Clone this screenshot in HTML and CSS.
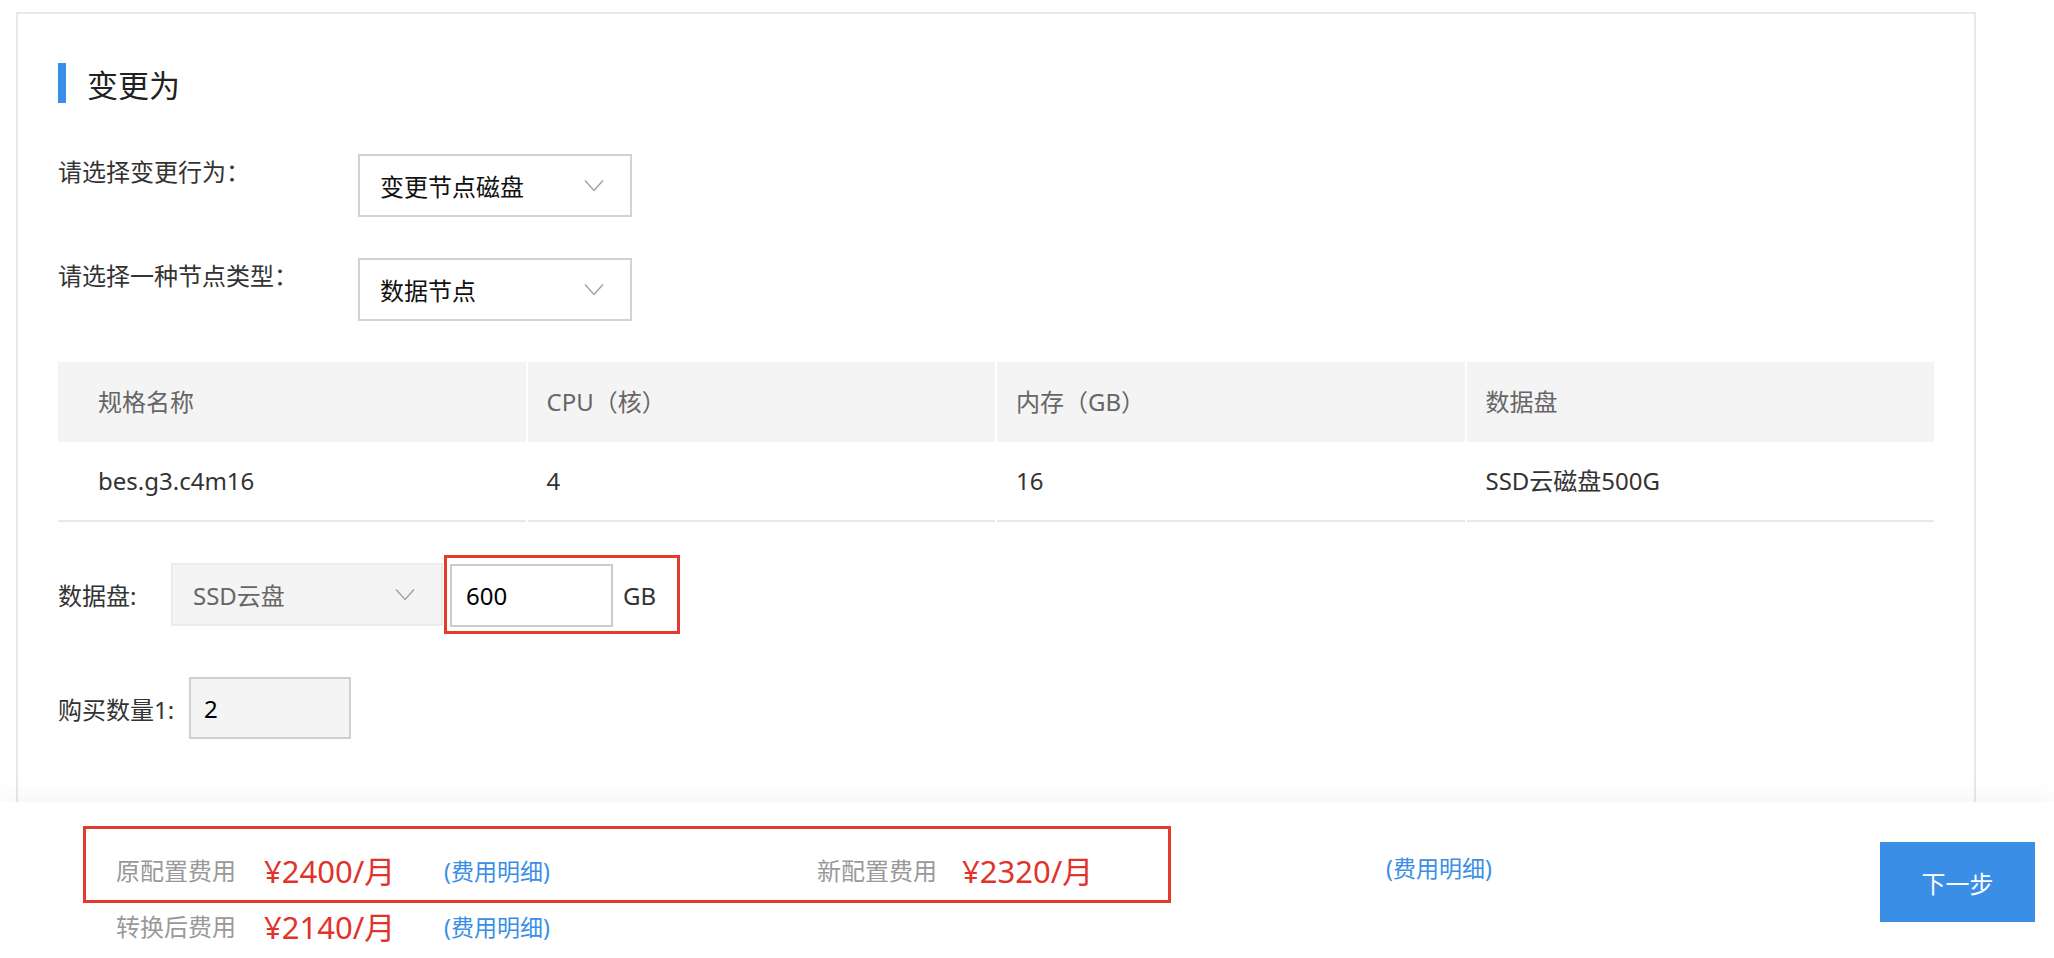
FILE: index.html
```html
<!DOCTYPE html>
<html lang="zh-CN">
  <head>
    <meta charset="UTF-8" />
    <meta name="viewport" content="width=device-width, initial-scale=1.0" />
    <title>变更配置</title>
    <link rel="stylesheet" href="styles.css">
  </head>
  <body>
<div class="page">
  <div class="main">
    <div class="panel">
      <h2 class="title">变更为</h2>

      <div class="form-row">
        <label class="form-label">请选择变更行为：</label>
        <div class="select">
          <span>变更节点磁盘</span>
          <svg class="arrow" width="20" height="13" viewBox="0 0 20 13"><polyline points="1,1.5 10,11.5 19,1.5" /></svg>
        </div>
      </div>

      <div class="form-row">
        <label class="form-label">请选择一种节点类型：</label>
        <div class="select">
          <span>数据节点</span>
          <svg class="arrow" width="20" height="13" viewBox="0 0 20 13"><polyline points="1,1.5 10,11.5 19,1.5" /></svg>
        </div>
      </div>

      <!-- 当前规格 -->
      <div class="spec-table">
        <div class="th first">规格名称</div>
        <div class="th">CPU（核）</div>
        <div class="th">内存（GB）</div>
        <div class="th">数据盘</div>
        <div class="td first">bes.g3.c4m16</div>
        <div class="td">4</div>
        <div class="td">16</div>
        <div class="td">SSD云磁盘500G</div>
      </div>

      <div class="disk-row">
        <span class="disk-label">数据盘:</span>
        <div class="select select-disabled">
          <span>SSD云盘</span>
          <svg class="arrow" width="20" height="13" viewBox="0 0 20 13"><polyline points="1,1.5 10,11.5 19,1.5" /></svg>
        </div>
        <div class="mark-box">
          <input class="size-input" type="text" value="600" />
          <span class="unit">GB</span>
        </div>
      </div>

      <div class="qty-row">
        <span class="qty-label">购买数量1:</span>
        <input class="qty-input" type="text" value="2" />
      </div>
    </div>
  </div>

  <div class="footer">
    <div class="fee-area">
      <div class="fee-main">
        <div class="fee-box">
          <div class="fee-group">
            <span class="fee-label">原配置费用</span>
            <span class="fee-price">¥2400/月</span>
            <a href="#" class="fee-link">(费用明细)</a>
          </div>
          <div class="fee-group fee-group-last">
            <span class="fee-label">新配置费用</span>
            <span class="fee-price">¥2320/月</span>
          </div>
        </div>
        <a href="#" class="fee-link fee-link-far">(费用明细)</a>
      </div>
      <div class="fee-row">
        <span class="fee-label">转换后费用</span>
        <span class="fee-price">¥2140/月</span>
        <a href="#" class="fee-link">(费用明细)</a>
      </div>
    </div>
    <button type="button" class="btn-next">下一步</button>
  </div>
</div>
  </body>
</html>
```

FILE: styles.css
```css
* {
  margin: 0;
  padding: 0;
  box-sizing: border-box;
  font-family: "Noto Sans", "Noto Sans CJK SC", sans-serif;
}

body {
  background-color: #fff;
  color: #333;
  font-size: 24px;
}

.page {
  display: flex;
  flex-direction: column;
  height: 100vh;
  overflow: hidden;
}

.main {
  flex: 1;
  overflow: hidden;
}

.panel {
  width: 1960px;
  min-height: 900px;
  margin: 12px 0 0 16px;
  padding: 49px 40px 0;
  border: 2px solid #e8e8e8;
}

.title {
  display: flex;
  align-items: center;
  height: 40px;
  margin-bottom: 51px;
  font-size: 31px;
  font-weight: normal;
  color: #222;
}

.title::before {
  content: "";
  width: 8px;
  height: 40px;
  margin-right: 21px;
  background: #3b8ee8;
}

.form-row {
  display: flex;
  align-items: flex-start;
  margin-bottom: 41px;
}

.form-label {
  width: 300px;
  line-height: 36px;
  color: #333;
}

.select {
  display: flex;
  justify-content: space-between;
  align-items: center;
  width: 274px;
  height: 63px;
  padding: 0 26px 0 20px;
  border: 2px solid #d2d2d2;
  color: #111;
  background: #fff;
}

.arrow polyline {
  fill: none;
  stroke: #a0a0a0;
  stroke-width: 1.4;
}

.spec-table {
  display: grid;
  grid-template-columns: repeat(4, 1fr);
  column-gap: 2px;
  margin-bottom: 33px;
}

.th,
.td {
  height: 80px;
  line-height: 80px;
  padding-left: 19px;
}

.th {
  background: #f4f4f4;
  color: #666;
}

.td {
  border-bottom: 2px solid #e8e8e8;
  line-height: 78px;
  color: #333;
}

.th.first,
.td.first {
  padding-left: 40px;
}

.disk-row {
  display: flex;
  align-items: center;
  margin-bottom: 43px;
}

.disk-label {
  width: 113px;
}

.select-disabled {
  width: 272px;
  background: #f4f4f4;
  border-color: #ebebeb;
  color: #666;
}

/* 红框标注 */
.mark-box {
  display: flex;
  align-items: center;
  margin-left: 1px;
  padding: 6px 21px 4px 3px;
  border: 3px solid #e33b30;
}

.size-input,
.qty-input {
  height: 63px;
  border: 2px solid #cccccc;
  font-size: 24px;
  color: #000;
  outline: none;
}

.size-input {
  width: 163px;
  padding-left: 14px;
  background: #fff;
}

.unit {
  margin-left: 10px;
  color: #333;
}

.qty-row {
  display: flex;
  align-items: center;
}

.qty-label {
  width: 131px;
}

.qty-input {
  width: 162px;
  height: 62px;
  padding-left: 13px;
  background: #f4f4f4;
  border-color: #cfcfcf;
}

.footer {
  position: relative;
  display: flex;
  align-items: flex-start;
  height: 156px;
  padding: 24px 19px 0 83px;
  background: #fff;
  box-shadow: 0 -8px 18px rgba(0, 0, 0, 0.035);
}

.fee-main {
  display: flex;
  align-items: center;
}

.fee-box {
  display: flex;
  width: 1088px;
  padding: 24px 0 11px 30px;
  border: 3px solid #e33b30;
}

.fee-group {
  display: flex;
  flex-shrink: 0;
  align-items: center;
  width: 701px;
  height: 36px;
}

.fee-group-last {
  width: auto;
  flex-shrink: 1;
}

.fee-label {
  width: 148px;
  flex-shrink: 0;
  color: #999;
  line-height: 36px;
}

.fee-group-last .fee-label {
  width: 145px;
}

.fee-price {
  width: 180px;
  flex-shrink: 0;
  font-size: 31px;
  line-height: 36px;
  color: #e0342b;
}

.fee-link {
  font-size: 23px;
  line-height: 36px;
  color: #3a8ee6;
  text-decoration: none;
}

.fee-link-far {
  margin-left: 215px;
  margin-top: 6px;
}

.fee-row {
  display: flex;
  align-items: center;
  height: 36px;
  margin-top: 6px;
  padding-left: 33px;
}

.btn-next {
  width: 155px;
  height: 80px;
  margin-left: auto;
  margin-top: 16px;
  border: none;
  background: #3b8ee6;
  color: #fff;
  font-size: 24px;
  cursor: pointer;
}
```
